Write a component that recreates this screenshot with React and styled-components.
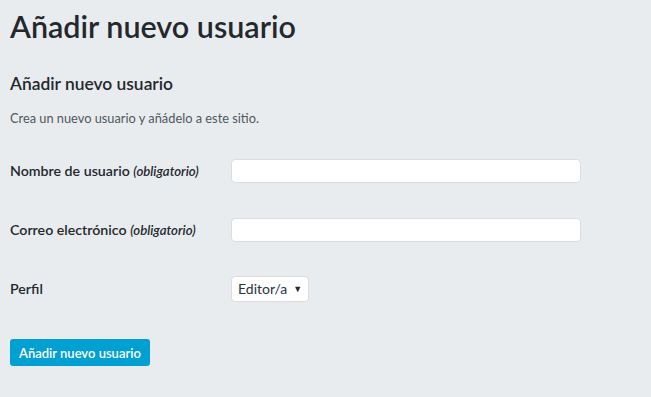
import styled, { createGlobalStyle } from "styled-components";

const GlobalStyle = createGlobalStyle`
  body {
    margin: 0;
    background: #e9ecef;
    font-family: Lato, "Noto Sans", sans-serif;
    color: #23282d;
  }
`;

const Page = styled.div`
  padding: 0 10px;
`;

const Title = styled.h1`
  font-size: 30.5px;
  font-weight: 600;
  margin: 0;
  padding-top: 6px;
  line-height: 40px;
`;

const Subtitle = styled.h2`
  font-size: 17.4px;
  font-weight: 600;
  margin: 26px 0 0;
  line-height: 24px;
`;

const Desc = styled.p`
  font-size: 12.8px;
  color: #50575e;
  margin: 12px 0 0;
  line-height: 20px;
`;

const Form = styled.div`
  margin-top: 13px;
  display: grid;
  grid-template-columns: 221px 1fr;
  grid-auto-rows: 59px;
  align-items: center;
`;

const Label = styled.label`
  font-size: 14.2px;
  font-weight: 600;

  em {
    font-style: italic;
    font-size: 13.2px;
  }
`;

const Input = styled.input`
  box-sizing: border-box;
  width: 350px;
  height: 24px;
  border: 1px solid #dcdcde;
  border-radius: 4px;
  background: #fff;
  outline: none;
`;

const SelectBox = styled.div`
  box-sizing: border-box;
  display: inline-flex;
  align-items: center;
  gap: 6px;
  height: 26px;
  padding: 0 6px;
  background: #fff;
  border: 1px solid #dcdcde;
  border-radius: 4px;
  font-size: 14px;
  color: #2c3338;
  justify-self: start;
`;

const Caret = styled.span`
  font-size: 9px;
  color: #23282d;
`;

const Button = styled.button`
  margin-top: 21px;
  background: #00a0d2;
  color: #fff;
  border: none;
  border-radius: 3px;
  height: 27px;
  padding: 0 9px;
  font-family: Lato, "Noto Sans", sans-serif;
  font-size: 13px;
  font-weight: 600;
`;

export default function App() {
  return (
    <Page>
      <GlobalStyle />
      <Title>Añadir nuevo usuario</Title>
      <Subtitle>Añadir nuevo usuario</Subtitle>
      <Desc>Crea un nuevo usuario y añádelo a este sitio.</Desc>
      <Form>
        <Label>
          Nombre de usuario <em>(obligatorio)</em>
        </Label>
        <Input type="text" />
        <Label>
          Correo electrónico <em>(obligatorio)</em>
        </Label>
        <Input type="text" />
        <Label>Perfil</Label>
        <SelectBox>
          Editor/a <Caret>▼</Caret>
        </SelectBox>
      </Form>
      <Button>Añadir nuevo usuario</Button>
    </Page>
  );
}
